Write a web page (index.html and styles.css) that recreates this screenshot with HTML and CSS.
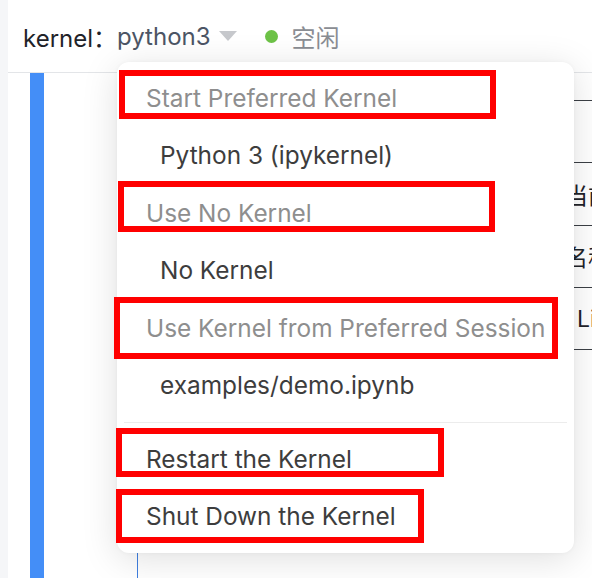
FILE: index.html
```html
<!DOCTYPE html>
<html lang="zh">
<head>
<meta charset="utf-8">
<title>Kernel menu</title>
<link rel="stylesheet" href="styles.css">
</head>
<body>
<div class="app">
  <div class="strip"></div>
  <div class="main">
    <header class="topbar">
      <span class="label">kernel：</span>
      <span class="kname">python3</span>
      <span class="caret"></span>
      <span class="dot"></span>
      <span class="status">空闲</span>
    </header>
    <div class="content">
      <div class="cellbar"></div>
      <div class="table">
        <div class="row head"></div>
        <div class="row cjk"><span class="cell">当前</span></div>
        <div class="row cjk"><span class="cell">名称</span></div>
        <div class="row latin"><span class="cell">Lib</span></div>
        <div class="row last"></div>
      </div>
    </div>
  </div>

  <div class="menu">
    <div class="group">Start Preferred Kernel</div>
    <div class="item">Python 3 (ipykernel)</div>
    <div class="group">Use No Kernel</div>
    <div class="item">No Kernel</div>
    <div class="group">Use Kernel from Preferred Session</div>
    <div class="item">examples/demo.ipynb</div>
    <div class="sep"></div>
    <div class="action">Restart the Kernel</div>
    <div class="action">Shut Down the Kernel</div>
  </div>

  <div class="mark m1"></div>
  <div class="mark m2"></div>
  <div class="mark m3"></div>
  <div class="mark m4"></div>
  <div class="mark m5"></div>
</div>
</body>
</html>
```

FILE: styles.css
```css
* { box-sizing: border-box; }
html, body {
  margin: 0;
  padding: 0;
  width: 592px;
  height: 578px;
  overflow: hidden;
}
body {
  font-family: Inter, "Noto Sans CJK SC", sans-serif;
  background: #ffffff;
}
.app {
  position: relative;
  display: flex;
  width: 592px;
  height: 578px;
}
.strip {
  width: 8px;
  flex: none;
  background: #f5f6f8;
}
.main {
  flex: 1;
  display: flex;
  flex-direction: column;
  background: #ffffff;
  min-width: 0;
}
.topbar {
  height: 73px;
  flex: none;
  display: flex;
  align-items: center;
  padding-left: 15px;
  border-bottom: 1px solid #e3e5e8;
  font-size: 24px;
  white-space: nowrap;
}
.label { color: #1f2329; }
.kname { color: #4c5565; }
.caret {
  width: 0;
  height: 0;
  margin-left: 8px;
  border-left: 9px solid transparent;
  border-right: 9px solid transparent;
  border-top: 10px solid #c6c8cc;
}
.dot {
  width: 13px;
  height: 13px;
  border-radius: 50%;
  background: #6dc247;
  margin-left: 28px;
}
.status {
  color: #8a8d93;
  margin-left: 14px;
}
.content {
  flex: 1;
  display: flex;
  min-height: 0;
}
.cellbar {
  width: 14px;
  margin-left: 22px;
  background: #448ef7;
  flex: none;
}
.table {
  margin-left: 93px;
  flex: 1;
  padding-top: 27px;
  border-left: 1px solid #3f7fe0;
  overflow: hidden;
}
.row {
  height: 62.3px;
  border-top: 1px solid #3b3f45;
  display: flex;
  align-items: center;
  font-size: 23px;
  color: #1f2329;
  white-space: nowrap;
}
.row.cjk { padding-left: 427px; }
.row.latin { padding-left: 439px; }
.row.last { height: 10px; }

.menu {
  position: absolute;
  left: 117px;
  top: 62px;
  width: 457px;
  height: 491px;
  background: #ffffff;
  border-radius: 12px;
  box-shadow: 0 6px 36px rgba(0, 0, 0, 0.13), 0 0 4px rgba(0, 0, 0, 0.04);
  padding-top: 7.5px;
  font-size: 24.4px;
}
.group, .item, .action {
  height: 57.5px;
  line-height: 57.5px;
  white-space: nowrap;
}
.group {
  padding-left: 29px;
  color: #8e8e8e;
}
.item {
  padding-left: 43px;
  color: #3d3d3d;
}
.action {
  padding-left: 29px;
  color: #3d3d3d;
}
.sep {
  height: 1px;
  background: #ececec;
  margin: 7px 7px 8px 7px;
}
.mark {
  position: absolute;
  border: 6px solid #ff0000;
}
.m1 { left: 119px; top: 70px; width: 377px; height: 49px; }
.m2 { left: 118px; top: 181px; width: 377px; height: 51px; }
.m3 { left: 114px; top: 297px; width: 444px; height: 62px; }
.m4 { left: 116px; top: 428px; width: 328px; height: 49px; }
.m5 { left: 116px; top: 489px; width: 308px; height: 54px; }
```
